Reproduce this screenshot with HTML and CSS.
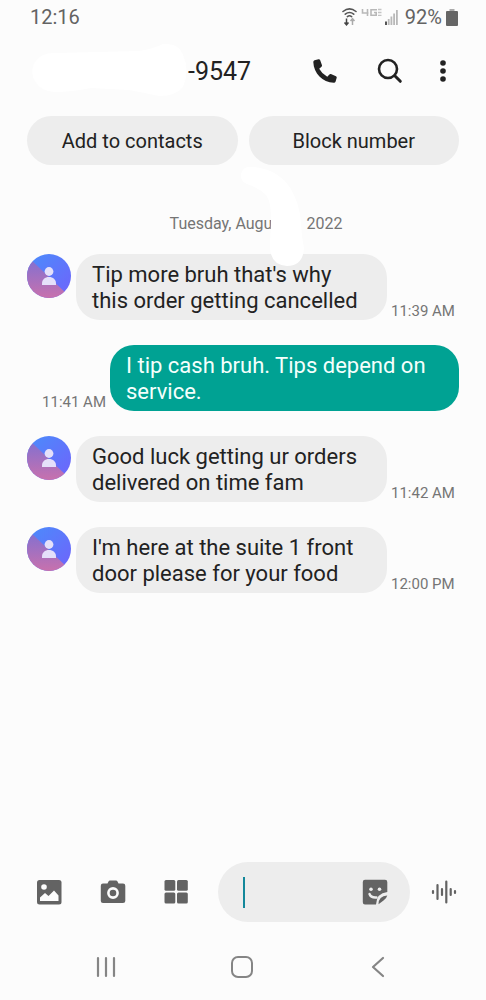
FILE: index.html
```
<!DOCTYPE html>
<html lang="en">
<head>
<meta charset="utf-8">
<meta name="viewport" content="width=device-width, initial-scale=1">
<title>Messages</title>
<link rel="stylesheet" href="styles.css">
</head>
<body>
<svg class="defs" width="0" height="0" aria-hidden="true">
  <defs>
    <linearGradient id="blue" x1="0" y1="0" x2="1" y2="1"><stop offset="0" stop-color="#4a8dfb"/><stop offset="1" stop-color="#7062fb"/></linearGradient>
    <linearGradient id="pink" x1="0" y1="0" x2="0" y2="1"><stop offset="0.200" stop-color="#8b70cc"/><stop offset="1" stop-color="#c871ad"/></linearGradient>
    <clipPath id="disc"><circle cx="22" cy="22" r="22"/></clipPath>
    <symbol id="avatar" viewBox="0 0 44 44">
      <g clip-path="url(#disc)">
        <rect width="44" height="44" fill="url(#blue)"/>
        <path d="M0 2 42 42V44H0Z" fill="url(#pink)"/>
      </g>
      <circle cx="22" cy="17.500" r="4.400" fill="#e5e0fa"/>
      <path d="M15 31v-1.500c0-4 3-6.500 7-6.500s7 2.500 7 6.500V31Z" fill="#e5e0fa"/>
    </symbol>
  </defs>
</svg>
<div class="screen">
  <div class="status">
    <span class="clock">12:16</span>
    <svg class="signals" viewBox="0 0 60 20" width="60" height="20" aria-hidden="true">
      <g fill="none" stroke="#555" stroke-width="1.600" stroke-linecap="round"><path d="M2 4.500Q8.500-.8 15 4.500M4.300 7.200Q8.500 3.800 12.700 7.200M6.400 9.600Q8.500 8 10.600 9.600"/></g>
      <path d="M5.500 11.500v6M3.500 15.500l2 2.300 2-2.300" fill="none" stroke="#444" stroke-width="1.500"/>
      <path d="M11.500 18v-6M9.500 14l2-2.300 2 2.300" fill="none" stroke="#aaa" stroke-width="1.500"/>
      <path d="M21.500 2v4h6M26.500 2v7M36 2.700h-6v5.600h5.200V5.500H33" fill="none" stroke="#b8b8b8" stroke-width="1.600"/>
      <path d="M37 2.500h3.500M37 5.500h3.500M37 8.400h3.500" fill="none" stroke="#c4c4c4" stroke-width="1.400"/>
      <path d="M44 14.500h2V18h-2Z" fill="#555"/>
      <path d="M46.800 12h1.800v6h-1.800ZM49.500 9.500h1.800V18h-1.800ZM52.200 6.500H54V18h-1.800ZM55 3h1.800v15H55Z" fill="#b8b8b8"/>
    </svg>
    <span>92%</span>
    <svg class="battery" viewBox="0 0 12 17" width="12" height="17" aria-hidden="true"><path d="M3.500 0h5v2h-5Z" fill="#aaa"/><path d="M1 2h10a1 1 0 0 1 1 1v13a1 1 0 0 1-1 1H1a1 1 0 0 1-1-1V3a1 1 0 0 1 1-1Z" fill="#666"/></svg>
  </div>

  <header class="header">
    <svg class="number-mask" viewBox="0 0 160 56" width="160" height="56" aria-hidden="true"><path d="M4 20Q10 10 26 11L108 9Q122 7 132 2Q148 1 152 13Q159 28 152 45Q145 54 128 54Q110 50 98 48L60 46Q40 50 24 50Q7 49 2 35Q0 26 4 20Z" fill="#fff"/></svg>
    <h1 class="title">-9547</h1>
    <button class="icon-button" aria-label="Call"><svg viewBox="0 0 26 26" width="26" height="26"><path d="M2.500 2.300 6.500 1.200Q7.600 1 8.100 2L10 7.200Q10.200 8.100 9.500 8.700L7.200 10.800Q10 16 15.300 18.800L17.400 16.500Q18 15.800 18.900 16.100L24 18.200Q25 18.700 24.700 19.800L23.500 23.700Q23.100 24.900 21.800 24.800C10.500 24.200 1.700 15.500 1.300 4Q1.300 2.700 2.500 2.300Z" fill="#222"/></svg></button>
    <button class="icon-button" aria-label="Search"><svg viewBox="0 0 26 26" width="26" height="26"><g fill="none" stroke="#222" stroke-linecap="round"><circle cx="11" cy="11" r="9" stroke-width="2.600"/><path d="M17.800 17.800 23.300 23.300" stroke-width="3"/></g></svg></button>
    <button class="icon-button more" aria-label="More options"><svg viewBox="0 0 8 26" width="8" height="26"><g fill="#222"><circle cx="4" cy="5" r="2.800"/><circle cx="4" cy="13" r="2.800"/><circle cx="4" cy="21" r="2.800"/></g></svg></button>
  </header>

  <div class="actions">
    <button class="action">Add to contacts</button>
    <button class="action">Block number</button>
  </div>

  <main class="thread">
    <div class="date">
      <span>Tuesday, Augu</span><span>2022</span>
      <svg class="date-mask" viewBox="0 0 66 104" width="66" height="104" aria-hidden="true"><path d="M2 10Q4 1 15 3C34 5 50 15 57 36Q61 45 62 60Q63 75 65 84Q64 102 48 102Q32 101 31 84C31 64 35 42 27 31Q20 24 8 20Q1 17 2 10Z" fill="#fff"/></svg>
    </div>
    <div class="message">
      <svg class="avatar" width="44" height="44" aria-hidden="true"><use href="#avatar"/></svg>
      <p class="bubble">Tip more bruh that's why<br>this order getting cancelled</p>
      <time class="time">11:39 AM</time>
    </div>
    <div class="message sent">
      <time class="time">11:41 AM</time>
      <p class="bubble">I tip cash bruh. Tips depend on<br>service.</p>
    </div>
    <div class="message">
      <svg class="avatar" width="44" height="44" aria-hidden="true"><use href="#avatar"/></svg>
      <p class="bubble">Good luck getting ur orders<br>delivered on time fam</p>
      <time class="time">11:42 AM</time>
    </div>
    <div class="message">
      <svg class="avatar" width="44" height="44" aria-hidden="true"><use href="#avatar"/></svg>
      <p class="bubble">I'm here at the suite 1 front<br>door please for your food</p>
      <time class="time">12:00 PM</time>
    </div>
  </main>

  <div class="composer">
    <div class="tools">
      <button class="icon-button" aria-label="Gallery"><svg viewBox="0 0 26 26" width="26" height="26"><rect x="1" y="1" width="24.500" height="24.500" rx="2.500" fill="#636363"/><circle cx="8" cy="8" r="2.800" fill="#fcfcfc"/><path d="M4 22v-3.500L9 14l3.500 3L18 11.500l4.500 5V22Z" fill="#fcfcfc"/></svg></button>
      <button class="icon-button" aria-label="Camera"><svg viewBox="0 0 26 26" width="26" height="26"><path d="M3 4.500h4.500l1-2Q9 1.500 10 1.500h6Q17 1.500 17.500 2.500l1 2H23Q25.300 4.500 25.300 6.800V22Q25.300 24 23 24H3Q.8 24 .8 22V6.800Q.8 4.500 3 4.500Z" fill="#636363"/><circle cx="13" cy="14" r="4.600" fill="#636363" stroke="#fcfcfc" stroke-width="2.600"/></svg></button>
      <button class="icon-button" aria-label="Apps"><svg viewBox="0 0 26 26" width="26" height="26"><g fill="#636363"><rect x=".5" y="1" width="10.800" height="10.800" rx="1.500"/><rect x="13" y="1" width="10.800" height="10.800" rx="1.500"/><rect x=".5" y="13.600" width="10.800" height="10.800" rx="1.500"/><rect x="13" y="13.600" width="10.800" height="10.800" rx="1.500"/></g></svg></button>
    </div>
    <div class="field">
      <span class="caret"></span>
      <input class="input" type="text" aria-label="Message">
      <button class="icon-button" aria-label="Stickers"><svg viewBox="0 0 26 26" width="26" height="26"><path d="M3 .8H23Q25.300.8 25.300 3V13Q14.500 14 14 25.500H3Q.8 25.500.8 23.200V3Q.8.800 3 .8Z" fill="#636363"/><path d="M25.300 16.500Q24.500 19.500 21.500 21.500L16.500 25.300Q16.500 17 25.300 16.500Z" fill="#636363"/><circle cx="9" cy="10.300" r="1.800" fill="#ededed"/><circle cx="17.500" cy="10.300" r="1.800" fill="#ededed"/><path d="M7.500 15Q9 19 14.500 18.500" fill="none" stroke="#ededed" stroke-width="2.400" stroke-linecap="round"/></svg></button>
    </div>
    <button class="icon-button" aria-label="Voice message"><svg viewBox="0 0 26 26" width="26" height="26"><path d="M2 12v2M6.500 6v14M11 10v6M15.300 2.500v21M19.700 10v6M24 12v2" fill="none" stroke="#636363" stroke-width="2.200" stroke-linecap="round"/></svg></button>
  </div>

  <nav class="nav">
    <button class="icon-button" aria-label="Recent apps"><svg viewBox="0 0 24 24" width="24" height="24"><path d="M4 3v18M12 3v18M20 3v18" fill="none" stroke="#858585" stroke-width="2.200" stroke-linecap="round"/></svg></button>
    <button class="icon-button" aria-label="Home"><svg viewBox="0 0 24 24" width="24" height="24"><rect x="2" y="2" width="20" height="20" rx="6" fill="none" stroke="#858585" stroke-width="2"/></svg></button>
    <button class="icon-button" aria-label="Back"><svg viewBox="0 0 24 24" width="24" height="24"><path d="M17 3 7 12 17 21" fill="none" stroke="#858585" stroke-width="2.200" stroke-linecap="round" stroke-linejoin="round"/></svg></button>
  </nav>
</div>
</body>
</html>
```
FILE: styles.css
```
* { box-sizing: border-box; }
body {
  margin: 0;
  background: #fcfcfc;
  color: #222;
  font-family: Roboto, "Liberation Sans", sans-serif;
}
button, input { font: inherit; color: inherit; border: 0; padding: 0; background: none; }
svg { display: block; flex: none; }
.defs { position: absolute; }
.screen { min-height: 100vh; display: flex; flex-direction: column; }
.status {
  height: 34px;
  padding: 0 28px 0 30px;
  display: flex;
  align-items: center;
  color: #636363;
  font-size: 20px;
}
.clock { margin-right: auto; }
.signals { margin-right: 4px; }
.battery { margin-left: 4px; }
.header {
  position: relative;
  height: 72px;
  padding: 2px 39px 0 188px;
  display: flex;
  align-items: center;
  gap: 39px;
}
.number-mask { position: absolute; left: 31px; top: 8px; }
.title { margin: 0; padding-top: 2px; flex: 1; font-size: 25px; font-weight: 400; line-height: 32px; }
.icon-button { display: flex; align-items: center; justify-content: center; cursor: pointer; }
.more { margin-left: -3px; }
.actions { display: flex; gap: 11px; padding: 10px 27px 0; }
.action { flex: 1; height: 49px; border-radius: 25px; background: #ededed; font-size: 20px; }
.thread { flex: 1; padding: 46px 27px 0; display: flex; flex-direction: column; gap: 25px; }
.date {
  position: relative;
  height: 24px;
  margin-bottom: -6px;
  padding-left: 26px;
  display: flex;
  align-items: center;
  justify-content: center;
  gap: 34px;
  color: #757575;
  font-size: 16px;
}
.date-mask { position: absolute; left: 50%; top: -47px; z-index: 1; margin-left: -4px; }
.message { display: flex; align-items: flex-end; gap: 4px; }
.avatar { align-self: flex-start; margin-right: 1px; }
.bubble {
  margin: 0;
  padding: 8px 16px 6px;
  min-width: 311px;
  border-radius: 24px;
  background: #ededed;
  font-size: 22px;
  line-height: 26px;
}
.sent { justify-content: flex-end; }
.sent .bubble { min-width: 349px; background: #00a293; color: #f4fffc; }
.time { color: #757575; font-size: 15px; line-height: 18px; white-space: nowrap; }
.composer { display: flex; align-items: center; padding: 0 29px 0 36px; }
.tools { display: flex; gap: 38px; margin-right: 28px; }
.field {
  flex: 1;
  min-width: 0;
  height: 60px;
  margin-right: 21px;
  padding: 0 22px 0 25px;
  border-radius: 30px;
  background: #ededed;
  display: flex;
  align-items: center;
}
.caret { width: 2px; height: 31px; background: #13889b; }
.input { flex: 1; min-width: 0; height: 40px; padding-left: 4px; outline: 0; font-size: 20px; }
.nav {
  display: grid;
  grid-template-columns: repeat(3, 1fr);
  justify-items: center;
  padding: 33px 40px 21px 38px;
}
```
